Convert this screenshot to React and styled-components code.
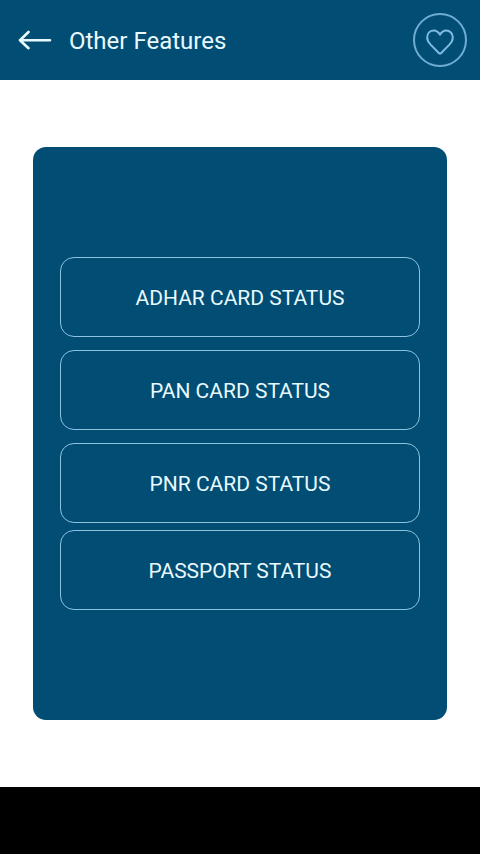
import React from "react";
import styled, { createGlobalStyle } from "styled-components";

const features = [
  { id: "adhar", label: "ADHAR CARD STATUS", gap: 0 },
  { id: "pan", label: "PAN CARD STATUS", gap: 13 },
  { id: "pnr", label: "PNR CARD STATUS", gap: 13 },
  { id: "passport", label: "PASSPORT STATUS", gap: 7 },
];

const App = () => {
  return (
    <Screen>
      <GlobalStyle />
      <Header>
        <BackButton type="button" aria-label="Back">
          <svg width="34" height="20" viewBox="0 0 34 20" fill="none">
            <path
              d="M32 10.2H2M10.5 2L2 10.2L10.5 18.2"
              stroke="#e8faff"
              strokeWidth="2.6"
              strokeLinecap="round"
              strokeLinejoin="round"
            />
          </svg>
        </BackButton>
        <Title>Other Features</Title>
        <FavoriteButton type="button" aria-label="Favorite">
          <svg width="28" height="26" viewBox="0 0 28 26" fill="none">
            <path
              d="M14 5.6C12.4 3.1 10.4 1.5 8 1.5C4 1.5 1.2 4.4 1.2 8.4C1.2 11.2 2.6 13.4 4.6 15.6L12.8 24Q14 25.2 15.2 24L23.4 15.6C25.4 13.4 26.8 11.2 26.8 8.4C26.8 4.4 24 1.5 20 1.5C17.6 1.5 15.6 3.1 14 5.6Z"
              stroke="#7fbcdf"
              strokeWidth="2"
              strokeLinejoin="round"
            />
          </svg>
        </FavoriteButton>
      </Header>

      <Content>
        <Card>
          {features.map((feature) => (
            <FeatureButton key={feature.id} type="button" $gap={feature.gap}>
              {feature.label}
            </FeatureButton>
          ))}
        </Card>
      </Content>

      <BottomBar />
    </Screen>
  );
};

export default App;

const GlobalStyle = createGlobalStyle`
  * {
    box-sizing: border-box;
  }
  body {
    margin: 0;
    background: #fff;
    font-family: Roboto, "Liberation Sans", sans-serif;
  }
  button {
    padding: 0;
    font-family: inherit;
    background: none;
    cursor: pointer;
  }
  svg {
    display: block;
  }
`;

const Screen = styled.div`
  display: flex;
  flex-direction: column;
  min-height: 100vh;
`;

const Header = styled.header`
  display: flex;
  align-items: center;
  height: 80px;
  padding: 0 13px 0 18px;
  background: #024d74;
`;

const BackButton = styled.button`
  border: none;
`;

const Title = styled.h1`
  flex: 1;
  margin: 0;
  padding: 2px 0 0 17px;
  font-size: 24px;
  font-weight: 400;
  line-height: 28px;
  color: #e8faff;
`;

const FavoriteButton = styled.button`
  display: flex;
  align-items: center;
  justify-content: center;
  width: 54px;
  height: 54px;
  padding-top: 4px;
  border: 2px solid #6fadd1;
  border-radius: 50%;
`;

const Content = styled.main`
  display: flex;
  flex: 1;
  padding: 67px 33px;
`;

const Card = styled.section`
  display: flex;
  flex: 1;
  flex-direction: column;
  justify-content: center;
  padding: 27px;
  background: #024d74;
  border-radius: 13px;
`;

const FeatureButton = styled.button`
  height: 80px;
  margin-top: ${(props) => props.$gap}px;
  padding-top: 2px;
  border: 1px solid #8cc4e0;
  border-radius: 14px;
  font-size: 21px;
  line-height: 26px;
  color: #e8faff;
`;

const BottomBar = styled.footer`
  height: 67px;
  background: #000;
`;
